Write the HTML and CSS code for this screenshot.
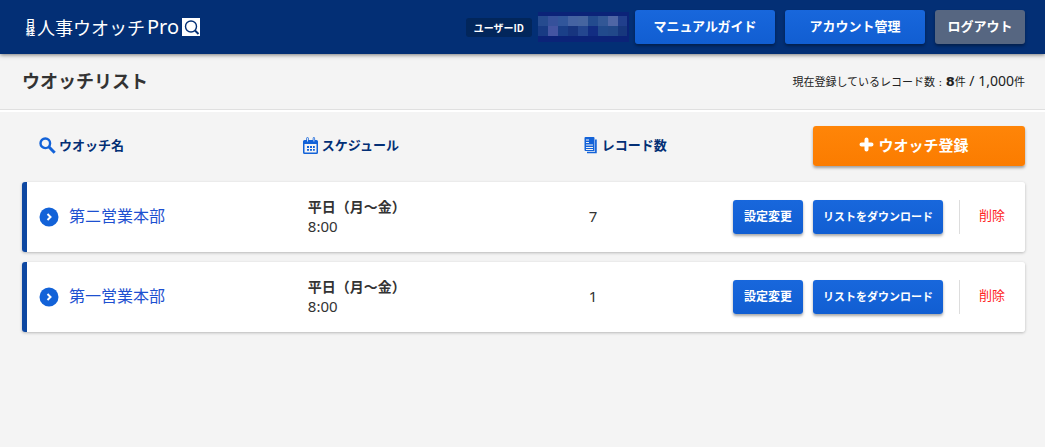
FILE: index.html
```html
<!DOCTYPE html>
<html lang="ja">
<head>
    <meta charset="UTF-8">
    <title>人事ウオッチPro</title>
    <link rel="stylesheet" href="styles.css">
</head>
<body>
    <header class="header">
        <a class="logo" href="#">
            <span class="logo_mark">日経</span>
            <span class="logo_name">人事ウオッチ</span><span class="logo_pro">Pro</span>
            <svg class="logo_icon" width="18" height="18" viewBox="0 0 18 18">
                <path fill="#fff" d="M0 0h18v18H0z"/>
                <g fill="none" stroke="#032f75"><circle cx="9" cy="8.5" r="5.500" stroke-width="1.4"/><path d="M13 12.500l3.500 3.500" stroke-width="2"/></g>
            </svg>
        </a>
        <div class="header_menu">
            <span class="user_label">ユーザーID</span>
            <svg class="user_id" width="91" height="30" viewBox="0 0 91 30" shape-rendering="crispEdges">
                <path fill="#0b2378" d="M0 0h91v30H0z"/>
                <path fill="#264b8f" d="M0 4h10v10H0z"/><path fill="#36519b" d="M10 4h10v10H10z"/>
                <path fill="#31569b" d="M20 4h10v10H20z"/><path fill="#4563a2" d="M30 4h10v10H30z"/>
                <path fill="#4665a0" d="M40 4h10v10H40z"/><path fill="#234b8e" d="M50 4h10v10H50z"/>
                <path fill="#325796" d="M60 4h10v10H60z"/><path fill="#4f66a5" d="M70 4h10v10H70z"/>
                <path fill="#213f8c" d="M80 4h9v10h-9z"/>
                <path fill="#183b84" d="M0 14h10v10H0z"/><path fill="#4455a2" d="M10 14h10v10H10z"/>
                <path fill="#1a3f88" d="M20 14h10v10H20z"/><path fill="#17357f" d="M30 14h10v10H30z"/>
                <path fill="#24468f" d="M40 14h10v10H40z"/><path fill="#122d82" d="M50 14h10v10H50z"/>
                <path fill="#214a8c" d="M60 14h10v10H60z"/><path fill="#214889" d="M70 14h10v10H70z"/>
                <path fill="#17377d" d="M80 14h9v10h-9z"/>
            </svg>
            <div class="header_buttons">
                <button type="button" class="btn btn_nav">マニュアルガイド</button>
                <button type="button" class="btn btn_nav">アカウント管理</button>
                <button type="button" class="btn btn_logout">ログアウト</button>
            </div>
        </div>
    </header>

    <div class="title_bar">
        <h1>ウオッチリスト</h1>
        <p class="record_total">現在登録しているレコード数 : <b class="total_num">8</b>件 <span class="num">/ 1,000</span>件</p>
    </div>

    <main class="content">
        <table class="watch_list">
            <colgroup>
                <col class="col_name">
                <col class="col_schedule">
                <col class="col_count">
                <col class="col_action">
            </colgroup>
            <thead>
                <tr>
                    <th class="th_name">
                        <div class="head">
                            <svg width="17" height="17" viewBox="0 0 17 17" fill="none" stroke="#1262d8"><circle cx="6.3" cy="6.3" r="4.8" stroke-width="2.4"/><path d="M10 10l5.7 5.7" stroke-width="3"/></svg>
                            ウオッチ名
                        </div>
                    </th>
                    <th>
                        <div class="head">
                            <svg width="16" height="17" viewBox="0 0 16 17">
                                <path fill="#1262d8" d="M1.5 3h1.800V1.500a1 1 0 0 1 2.400 0V3h4V1.500a1 1 0 0 1 2.400 0V3h1.400A1.500 1.500 0 0 1 15 4.500v11a1.500 1.500 0 0 1-1.500 1.500h-12A1.500 1.500 0 0 1 0 15.500v-11A1.500 1.500 0 0 1 1.500 3z"/>
                                <path fill="#f4f4f4" d="M1.500 7h12v8.500h-12z"/>
                                <path fill="none" stroke="#cfe0f8" d="M4.500 1v3.500M10.900 1v3.500"/>
                                <path fill="#1262d8" d="M4 9h2v2H4zM7 9h2v2H7zM10 9h1.800v2H10zM4 12h2v1.800H4zM7 12h2v1.800H7zM10 12h1.800v1.800H10z"/>
                            </svg>
                            スケジュール
                        </div>
                    </th>
                    <th>
                        <div class="head">
                            <svg width="15" height="17" viewBox="0 0 15 17">
                                <path fill="#1262d8" d="M1.500 0h8A1 1 0 0 1 10.500 1v13H1.500A1 1 0 0 1 .5 13V1a1 1 0 0 1 1-1z"/>
                                <path fill="#f4f4f4" d="M2 2.500h3v1H2zM2 5h3v1H2zM2 7.500h7v1H2zM2 10h7v1H2zM2 12h7v1H2z"/>
                                <path fill="none" stroke="#1262d8" stroke-width="1.700" d="M11.900 2.500v13H3"/>
                            </svg>
                            レコード数
                        </div>
                    </th>
                    <th class="th_action">
                        <button type="button" class="btn btn_add">
                            <svg width="15" height="15" viewBox="0 0 15 15" stroke="#fff" stroke-width="4" stroke-linecap="round"><path d="M7.500 2.500v10M2.500 7.500h10"/></svg>
                            ウオッチ登録
                        </button>
                    </th>
                </tr>
            </thead>
            <tbody>
                <tr>
                    <td>
                        <a class="watch_link" href="#">
                            <svg width="20" height="20" viewBox="0 0 20 20" fill="none"><circle cx="10" cy="10" r="9.500" fill="#1262d8"/><path d="M8.500 7l3 3-3 3" stroke="#fff" stroke-width="2"/></svg>
                            <span class="watch_name">第二営業本部</span>
                        </a>
                    </td>
                    <td><b class="days">平日（月〜金）</b><span class="time">8:00</span></td>
                    <td class="count">7</td>
                    <td>
                        <div class="actions">
                            <button type="button" class="btn btn_edit">設定変更</button>
                            <button type="button" class="btn btn_download">リストをダウンロード</button>
                            <a class="delete" href="#">削除</a>
                        </div>
                    </td>
                </tr>
                <tr>
                    <td>
                        <a class="watch_link" href="#">
                            <svg width="20" height="20" viewBox="0 0 20 20" fill="none"><circle cx="10" cy="10" r="9.500" fill="#1262d8"/><path d="M8.500 7l3 3-3 3" stroke="#fff" stroke-width="2"/></svg>
                            <span class="watch_name">第一営業本部</span>
                        </a>
                    </td>
                    <td><b class="days">平日（月〜金）</b><span class="time">8:00</span></td>
                    <td class="count">1</td>
                    <td>
                        <div class="actions">
                            <button type="button" class="btn btn_edit">設定変更</button>
                            <button type="button" class="btn btn_download">リストをダウンロード</button>
                            <a class="delete" href="#">削除</a>
                        </div>
                    </td>
                </tr>
            </tbody>
        </table>
    </main>
</body>
</html>
```
FILE: styles.css
```css
* {
    box-sizing: border-box;
}
body {
    margin: 0;
    background: #f4f4f4;
    color: #333;
    font-family: "Noto Sans CJK JP", sans-serif;
    font-size: 14px;
    line-height: 20px;
}
a {
    text-decoration: none;
}
svg {
    display: block;
    flex: none;
}

/* header */
.header {
    display: flex;
    justify-content: space-between;
    align-items: center;
    padding: 10px 20px 10px 26px;
    background: #032f75;
    box-shadow: 0 1px 4px rgba(0, 0, 0, 0.5);
}
.logo {
    display: flex;
    align-items: center;
    color: #fff;
    white-space: nowrap;
}
.logo_mark {
    margin-right: 2px;
    font-size: 9px;
    font-weight: bold;
    line-height: 9px;
    writing-mode: vertical-rl;
}
.logo_name {
    font-size: 18px;
}
.logo_pro {
    margin: 0 3px 0 2px;
    font-family: "Noto Sans", sans-serif;
    font-size: 20px;
}
.header_menu {
    display: flex;
    align-items: center;
    gap: 6px;
}
.user_label {
    padding: 0 8px;
    border-radius: 3px;
    background: #02265b;
    color: #fff;
    font-size: 10px;
    font-weight: bold;
    line-height: 19px;
}
.header_buttons {
    display: flex;
    gap: 10px;
}

/* buttons */
.btn {
    height: 34px;
    padding: 0 0 3px;
    border: 0;
    border-radius: 3px;
    background: linear-gradient(#1867dc, #115ed2);
    box-shadow: 0 2px 3px rgba(0, 0, 0, 0.35);
    color: #fff;
    font-family: inherit;
    font-weight: bold;
    white-space: nowrap;
    cursor: pointer;
}
.btn_nav {
    width: 140px;
    font-size: 13px;
}
.btn_logout {
    width: 90px;
    background: #566681;
    font-size: 13px;
}
.btn_add {
    display: flex;
    justify-content: center;
    align-items: center;
    gap: 4px;
    width: 212px;
    height: 40px;
    padding-right: 10px;
    background: linear-gradient(#ff8508, #fb7c00);
    font-size: 15px;
}
.btn_edit {
    width: 70px;
    font-size: 12px;
}
.btn_download {
    width: 130px;
    font-size: 11px;
}

/* title */
.title_bar {
    display: flex;
    justify-content: space-between;
    align-items: center;
    padding: 13px 20px 16px 22px;
    border-bottom: 1px solid #e0e0e0;
    box-shadow: 0 2px 0 #fff;
}
h1 {
    margin: 0;
    font-size: 18px;
    line-height: 26px;
}
.record_total {
    margin: 4px 0 0;
    color: #222;
    font-family: "DejaVu Sans", "Noto Sans CJK JP", sans-serif;
    font-size: 11px;
}
.num {
    font-family: "Noto Sans", sans-serif;
    font-size: 14px;
}
.total_num {
    font-size: 13px;
}

/* list */
.content {
    padding: 6px 20px 20px 22px;
}
.watch_list {
    width: 100%;
    table-layout: fixed;
    border-collapse: separate;
    border-spacing: 0 10px;
}
.col_name, .col_schedule {
    width: 28%;
}
.col_count {
    width: 14%;
}
th {
    padding: 0 0 6px;
    text-align: left;
    vertical-align: top;
}
.th_name {
    padding-left: 17px;
}
.head {
    display: flex;
    align-items: center;
    gap: 3px;
    height: 38px;
    color: #032f75;
    font-size: 13px;
}
.th_action .btn_add {
    margin-left: auto;
}
tbody tr {
    border-radius: 3px;
    box-shadow: 0 1px 3px rgba(0, 0, 0, 0.25);
}
td {
    height: 70px;
    padding: 0 0 2px 5px;
    background: #fff;
}
td:first-child {
    padding: 0 0 0 12px;
    border-left: 5px solid #0d47a1;
    border-radius: 3px 0 0 3px;
}
td:last-child {
    padding: 0 20px 0 0;
    border-radius: 0 3px 3px 0;
}
.watch_link {
    display: flex;
    align-items: center;
    gap: 10px;
    color: #1d50d0;
    font-size: 16px;
}
.watch_name {
    padding-bottom: 4px;
}
.days, .time {
    display: block;
}
.time, .count {
    font-family: "Noto Sans", sans-serif;
    font-size: 15px;
}
.actions {
    display: flex;
    justify-content: flex-end;
    align-items: center;
    gap: 10px;
}
.delete {
    height: 34px;
    margin-left: 6px;
    padding-left: 19px;
    border-left: 1px solid #ddd;
    color: #f22;
    font-size: 13px;
    line-height: 30px;
}
```
